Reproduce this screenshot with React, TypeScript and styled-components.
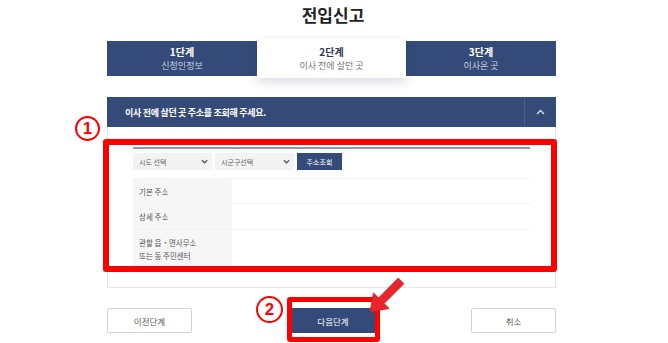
import styled, { createGlobalStyle } from 'styled-components';

const NAVY = '#344a78';

const GlobalStyle = createGlobalStyle`
  body {
    margin: 0;
    background: #fff;
    font-family: "Noto Sans CJK KR", "Noto Sans", sans-serif;
    color: #333;
  }
`;

const steps = [
  { no: '1단계', desc: '신청인정보' },
  { no: '2단계', desc: '이사 전에 살던 곳' },
  { no: '3단계', desc: '이사온 곳' },
];

const rows = [
  { label: ['기본 주소'], height: 25 },
  { label: ['상세 주소'], height: 26 },
  { label: ['관할 읍・면사무소', '또는 동 주민센터'], height: 37 },
];

function Chevron() {
  return (
    <svg width="7" height="5" viewBox="0 0 7 5">
      <path d="M0.8 1.2 L3.5 3.8 L6.2 1.2" fill="none" stroke="#555" strokeWidth="1.2" />
    </svg>
  );
}

export default function App() {
  return (
    <>
      <GlobalStyle />
      <Page>
        <Title>전입신고</Title>

        <Steps>
          {steps.map((s, i) => (
            <Step key={s.no} $active={i === 1}>
              <StepNo $active={i === 1}>{s.no}</StepNo>
              <StepDesc $active={i === 1}>{s.desc}</StepDesc>
            </Step>
          ))}
        </Steps>

        <AccordionHead>
          <HeadText>이사 전에 살던 곳 주소를 조회해 주세요.</HeadText>
          <HeadToggle>
            <svg width="9" height="6" viewBox="0 0 9 6">
              <path d="M1 5 L4.5 1.5 L8 5" fill="none" stroke="#dfe4ee" strokeWidth="1.3" />
            </svg>
          </HeadToggle>
        </AccordionHead>

        <Panel>
          <TopLine />
          <SearchRow>
            <SelectBox $width={79}>
              시도 선택
              <Chevron />
            </SelectBox>
            <SelectBox $width={79}>
              시군구선택
              <Chevron />
            </SelectBox>
            <SearchButton>주소조회</SearchButton>
          </SearchRow>
          <Table>
            {rows.map((r) => (
              <Row key={r.label[0]} $height={r.height}>
                <Label>
                  {r.label.map((l) => (
                    <LabelLine key={l}>{l}</LabelLine>
                  ))}
                </Label>
                <Value />
              </Row>
            ))}
          </Table>
        </Panel>

        <Buttons>
          <Button>이전단계</Button>
          <Button $primary $shift={3}>다음단계</Button>
          <Button>취소</Button>
        </Buttons>

        {/* annotations laid over the screenshot */}
        <Mark $left={-4} $top={139} $width={454} $height={133} $border={6} />
        <Mark $left={180} $top={297} $width={93} $height={45} $border={5} />
        <Circled $left={-32} $top={116} $size={25}>1</Circled>
        <Circled $left={149} $top={296} $size={27}>2</Circled>
        <Arrow viewBox="0 0 40 40" width="40" height="40">
          <polygon
            points="4,36 23.1,32.5 18.1,27.5 37.9,7.7 32.3,2.1 12.5,21.9 7.5,16.9"
            fill="#e8252b"
            stroke="#c81d22"
            strokeWidth="0.8"
          />
        </Arrow>
      </Page>
    </>
  );
}

const Page = styled.div`
  position: relative;
  width: 449px;
  margin-left: 107px;
  padding-bottom: 10px;
`;

const Title = styled.h1`
  margin: 0;
  height: 30px;
  line-height: 30px;
  text-align: center;
  font-size: 17px;
  font-weight: 700;
  color: #222;
  padding-left: 3px;
`;

const Steps = styled.div`
  display: grid;
  grid-template-columns: 150px 149px 150px;
  margin-top: 11px;
  height: 35px;
`;

const Step = styled.div<{ $active: boolean }>`
  display: flex;
  flex-direction: column;
  align-items: center;
  justify-content: center;
  height: ${({ $active }) => ($active ? '39px' : '35px')};
  margin-top: ${({ $active }) => ($active ? '-2px' : '0')};
  padding-bottom: 1px;
  box-sizing: border-box;
  background: ${({ $active }) => ($active ? '#fff' : NAVY)};
  box-shadow: ${({ $active }) => ($active ? '0 4px 10px rgba(30, 40, 80, 0.16)' : 'none')};
  position: relative;
  z-index: ${({ $active }) => ($active ? 1 : 0)};
`;

const StepNo = styled.div<{ $active: boolean }>`
  font-size: 10px;
  font-weight: 700;
  line-height: 15px;
  color: ${({ $active }) => ($active ? '#2c3a5a' : '#fff')};
`;

const StepDesc = styled.div<{ $active: boolean }>`
  font-size: 9px;
  line-height: 13px;
  color: ${({ $active }) => ($active ? '#777' : '#c9d0df')};
`;

const AccordionHead = styled.div`
  display: flex;
  align-items: center;
  height: 30px;
  margin-top: 21px;
  background: ${NAVY};
`;

const HeadText = styled.div`
  flex: 1;
  padding-left: 18px;
  font-size: 9px;
  font-weight: 700;
  letter-spacing: -0.3px;
  color: #fff;
`;

const HeadToggle = styled.div`
  display: flex;
  align-items: center;
  justify-content: center;
  width: 31px;
  height: 100%;
  border-left: 1px solid rgba(255, 255, 255, 0.12);
`;

const Panel = styled.div`
  border: 1px solid #e6e6e6;
  border-top: none;
  padding: 20px 25px 20px;
`;

const TopLine = styled.div`
  height: 2px;
  background: #8d9ab4;
`;

const SearchRow = styled.div`
  display: flex;
  gap: 3px;
  margin-top: 4px;
  height: 17px;
`;

const SelectBox = styled.div<{ $width: number }>`
  display: flex;
  align-items: center;
  justify-content: space-between;
  width: ${({ $width }) => $width}px;
  padding: 0 4px 0 6px;
  box-sizing: border-box;
  background: #f3f3f3;
  font-size: 7px;
  color: #666;
`;

const SearchButton = styled.button`
  width: 45px;
  height: 17px;
  padding: 0;
  border: none;
  background: ${NAVY};
  color: #fff;
  font-family: inherit;
  font-size: 7px;
`;

const Table = styled.div`
  margin-top: 8px;
  border-top: 1px solid #f0f0f0;
`;

const Row = styled.div<{ $height: number }>`
  display: flex;
  box-sizing: border-box;
  height: ${({ $height }) => $height}px;
  border-bottom: 1px solid #f2f2f2;
  &:last-child {
    border-bottom: none;
  }
`;

const Label = styled.div`
  display: flex;
  flex-direction: column;
  justify-content: center;
  gap: 4px;
  flex: 0 0 99px;
  box-sizing: border-box;
  padding-left: 6px;
  background: #f6f6f6;
`;

const LabelLine = styled.div`
  font-size: 7.5px;
  line-height: 9px;
  color: #555;
`;

const Value = styled.div`
  flex: 1;
  background: #fff;
`;

const Buttons = styled.div`
  display: flex;
  justify-content: space-between;
  margin-top: 20px;
`;

const Button = styled.button<{ $primary?: boolean; $shift?: number }>`
  width: 85px;
  height: 25px;
  padding: 0;
  margin-left: ${({ $shift }) => $shift ?? 0}px;
  border: 1px solid ${({ $primary }) => ($primary ? NAVY : '#d4d4d4')};
  border-radius: 2px;
  background: ${({ $primary }) => ($primary ? NAVY : '#fff')};
  color: ${({ $primary }) => ($primary ? '#fff' : '#555')};
  font-family: inherit;
  font-size: 8.5px;
`;

const Mark = styled.div<{ $left: number; $top: number; $width: number; $height: number; $border: number }>`
  position: absolute;
  left: ${({ $left }) => $left}px;
  top: ${({ $top }) => $top}px;
  width: ${({ $width }) => $width}px;
  height: ${({ $height }) => $height}px;
  box-sizing: border-box;
  border: ${({ $border }) => $border}px solid #ff0000;
  border-radius: 3px;
  pointer-events: none;
`;

const Circled = styled.div<{ $left: number; $top: number; $size: number }>`
  position: absolute;
  left: ${({ $left }) => $left}px;
  top: ${({ $top }) => $top}px;
  width: ${({ $size }) => $size}px;
  height: ${({ $size }) => $size}px;
  box-sizing: border-box;
  border: 2px solid #ff0000;
  border-radius: 50%;
  display: flex;
  align-items: center;
  justify-content: center;
  font-family: "Liberation Sans", Arial, sans-serif;
  font-size: 17px;
  font-weight: 700;
  color: #ff0000;
  background: #fff;
`;

const Arrow = styled.svg`
  position: absolute;
  left: 259px;
  top: 276px;
`;
